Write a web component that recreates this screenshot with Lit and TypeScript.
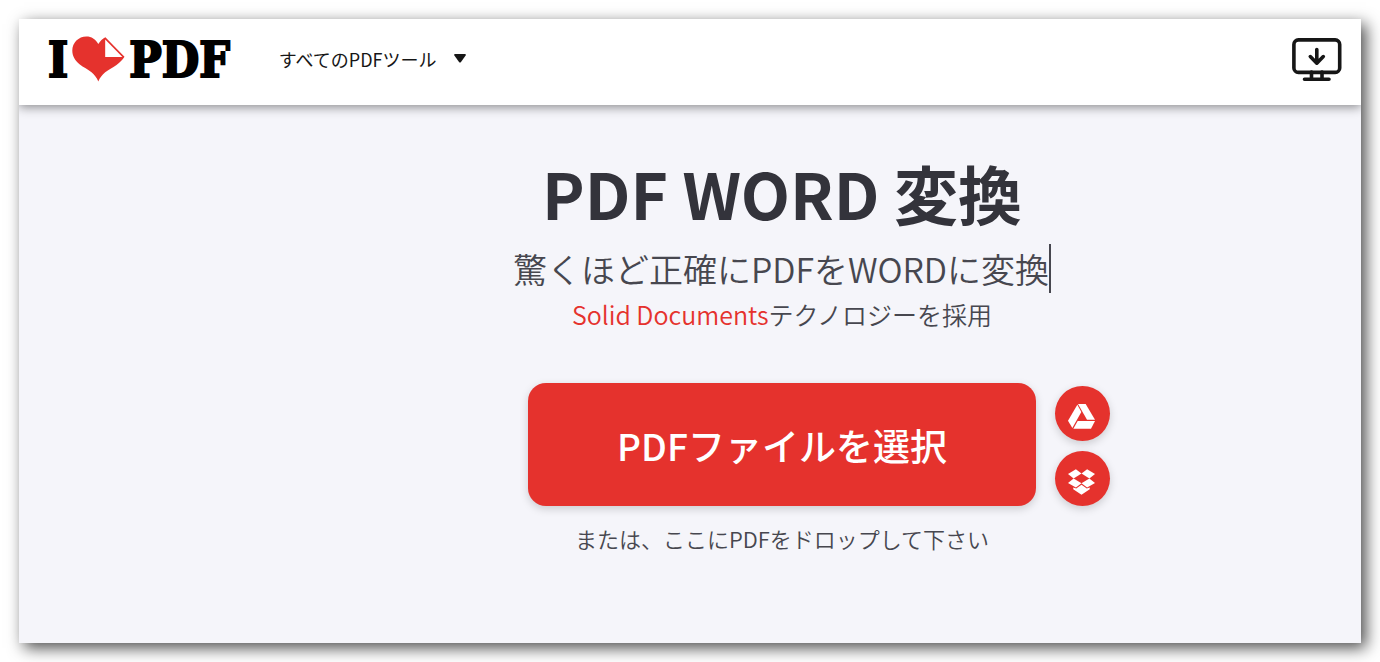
import { LitElement, html, css } from "lit";
import { customElement } from "lit/decorators.js";

@customElement("app-header")
class AppHeader extends LitElement {
  static styles = css`
    :host {
      display: block;
      position: relative;
      z-index: 1;
      clip-path: inset(0 0 -20px 0);
    }
    .bar {
      display: flex;
      align-items: center;
      box-sizing: border-box;
      min-height: 86px;
      padding: 0 19px 5px 29px;
      background: #fff;
      box-shadow: 0 2px 10px rgba(0, 0, 0, 0.45);
    }
    .logo {
      display: flex;
      align-items: center;
      gap: 4px;
      color: #000;
      text-decoration: none;
      font: bold 48px/50px "DejaVu Serif Condensed", "DejaVu Serif", serif;
      -webkit-text-stroke: 2px #000;
    }
    .heart {
      display: block;
      width: 53px;
      height: 46px;
      padding-bottom: 2px;
    }
    .menu {
      display: flex;
      align-items: center;
      gap: 17px;
      margin-left: 49px;
      padding: 0 0 2px;
      border: 0;
      background: none;
      color: #161616;
      font: 400 18px/26px "Noto Sans CJK JP", sans-serif;
      cursor: pointer;
    }
    .desktop {
      margin-left: auto;
      color: #161616;
    }
    .desktop svg,
    .menu svg {
      display: block;
    }
  `;

  render() {
    return html`
      <header class="bar">
        <a class="logo" href="#" aria-label="I love PDF">
          <span>I</span>
          <svg class="heart" viewBox="0 0 53 46" aria-hidden="true">
            <path
              fill="#e5322d"
              d="M26.3 8C23.5 3 19.5.4 14.4.4 6.5.4.3 6.600.3 14.500.3 20 3 24.500 7.500 28.300 11.500 31.500 16 33.300 19.500 36.300 22.500 38.900 24.800 42 26.300 45.400 27.800 42 30.200 38.900 33.200 36.300 36.500 33.500 40.500 32.200 44.500 29 48 26.200 50.500 23.800 52.500 20.700L33.400 1.200C30.500 2.700 28.200 4.900 26.300 8Z"
            />
            <path fill="#fff" d="M33.200 3.600V21H50.400Z" />
          </svg>
          <span>PDF</span>
        </a>
        <button class="menu" type="button">
          すべてのPDFツール
          <svg width="12" height="9" viewBox="0 0 12 9" aria-hidden="true">
            <path fill="currentColor" d="M1 0H11Q12.300.2 11.600 1.500L7 7.900Q6 9 5 7.900L.4 1.500Q-.3.2 1 0Z" />
          </svg>
        </button>
        <a class="desktop" href="#" aria-label="デスクトップ">
          <svg
            width="50"
            height="44"
            viewBox="0 0 50 44"
            fill="none"
            stroke="currentColor"
            stroke-width="3.6"
            stroke-linecap="round"
            stroke-linejoin="round"
            aria-hidden="true"
          >
            <rect x="1.900" y="1.900" width="45.800" height="32.500" rx="4.500" />
            <path d="M19.500 34V41M30 34V41M12.500 41.300H37M24.800 11.500V25M18.300 18.600L24.800 25.200 31.300 18.600" />
          </svg>
        </a>
      </header>
    `;
  }
}

@customElement("file-picker")
class FilePicker extends LitElement {
  static styles = css`
    :host {
      display: block;
    }
    .row {
      display: grid;
      grid-template-columns: 1fr minmax(auto, 508px) 1fr;
      column-gap: 19px;
      align-items: end;
    }
    .pick {
      grid-column: 2;
      min-height: 123px;
      padding: 0 24px;
      border: 0;
      border-radius: 18px;
      background: #e5322d;
      color: #fff;
      font: 500 37px/54px "Noto Sans CJK JP", sans-serif;
      box-shadow: 0 3px 9px rgba(0, 0, 0, 0.17);
      cursor: pointer;
    }
    .clouds {
      display: flex;
      flex-direction: column;
      gap: 10px;
    }
    .cloud {
      display: grid;
      place-items: center;
      box-sizing: border-box;
      width: 55px;
      height: 55px;
      padding: 6px 2px 0 0;
      border: 0;
      border-radius: 50%;
      background: #e5322d;
      color: #fff;
      box-shadow: 0 3px 9px rgba(0, 0, 0, 0.17);
      cursor: pointer;
    }
    .cloud svg {
      display: block;
    }
  `;

  render() {
    return html`
      <div class="row">
        <button class="pick" type="button">PDFファイルを選択</button>
        <div class="clouds">
          <button class="cloud" type="button" aria-label="Google Drive">
            <svg width="27" height="25" viewBox="0 0 81 75" fill="currentColor" aria-hidden="true">
              <path d="M28 2L40 24 13 72 0 50Z" />
              <path d="M30 0H53L81 47H57Z" />
              <path d="M29 51H81L69 74H16Z" />
            </svg>
          </button>
          <button class="cloud" type="button" aria-label="Dropbox">
            <svg width="27" height="26" viewBox="0 0 82 78" fill="currentColor" aria-hidden="true">
              <path d="M24 0L41 13 17 28 0 15Z" />
              <path d="M58 0L82 15 65 28 41 13Z" />
              <path d="M17 28L41 43 24 56 0 42Z" />
              <path d="M65 28L82 42 58 56 41 43Z" />
              <path d="M41 47L57 59 66 56V61L41 78 16 61V56L25 59Z" />
            </svg>
          </button>
        </div>
      </div>
    `;
  }
}

@customElement("app-root")
class AppRoot extends LitElement {
  static styles = css`
    :host {
      display: flex;
      box-sizing: border-box;
      min-height: 100vh;
      padding: 19px;
      background: #fff;
      font-family: "Noto Sans CJK JP", sans-serif;
    }
    .frame {
      flex: 1;
      background: #f5f5fa;
      box-shadow: 5px 5px 15px rgba(0, 0, 0, 0.7);
    }
    .tool {
      padding: 51px 0 0 184px;
      color: #47474f;
      font-weight: 350;
      text-align: center;
    }
    .title {
      margin: 0;
      color: #33333b;
      font-size: 64px;
      font-weight: 700;
      line-height: 72px;
    }
    .subtitle {
      display: inline-block;
      margin: 16px 0 0;
      border-right: 2px solid #47474f;
      font-size: 34px;
      font-weight: 350;
      line-height: 49px;
      vertical-align: top;
    }
    .powered {
      margin: 3px 0 51px;
      font-size: 25px;
      line-height: 36px;
    }
    .powered a {
      color: #e5322d;
      text-decoration: none;
    }
    .hint {
      margin: 16px 0 0;
      font-size: 22px;
      line-height: 33px;
    }
  `;

  render() {
    return html`
      <div class="frame">
        <app-header></app-header>
        <main class="tool">
          <h1 class="title">PDF WORD 変換</h1>
          <h2 class="subtitle">驚くほど正確にPDFをWORDに変換</h2>
          <p class="powered"><a href="#">Solid Documents</a>テクノロジーを採用</p>
          <file-picker></file-picker>
          <p class="hint">または、ここにPDFをドロップして下さい</p>
        </main>
      </div>
    `;
  }
}
